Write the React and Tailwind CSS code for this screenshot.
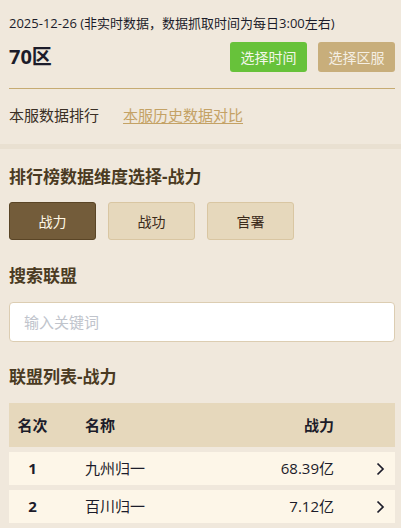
import React, { useState } from 'react';

const dims = ['战力', '战功', '官署'];

const alliances = [
    { rank: 1, name: '九州归一', value: '68.39亿' },
    { rank: 2, name: '百川归一', value: '7.12亿' },
];

function Chevron() {
    return (
        <svg width="9" height="14" viewBox="0 0 9 14" fill="none">
            <polyline points="1.5,1.5 7,7 1.5,12.5" stroke="#1c1c2a" strokeWidth="1.7" />
        </svg>
    );
}

export default function App() {
    const [active, setActive] = useState('战力');

    return (
        <div className="min-h-screen bg-[#f0e8dc] font-['Open_Sans','Noto_Sans_CJK_SC',sans-serif] text-[#1c1c2a]">
            {/* Server header */}
            <div className="pl-[9px] pr-[6px] pt-[13px]">
                <div className="text-[13px] leading-5">2025-12-26 (非实时数据，数据抓取时间为每日3:00左右)</div>
                <div className="mt-[9px] flex items-center justify-between">
                    <div className="text-[20px] font-bold leading-none">70区</div>
                    <div className="flex gap-[11px]">
                        <button className="h-[30px] w-[77px] rounded-[3px] bg-[#67c23a] text-[14px] text-[#f3f7ea]">选择时间</button>
                        <button className="h-[30px] w-[77px] rounded-[3px] bg-[#c8ae7b] text-[14px] text-[#f5efe4]">选择区服</button>
                    </div>
                </div>
                <div className="mt-[16px] border-b border-[#c6ab72]" />
                <div className="mt-[15px] flex items-center pb-[18px] text-[15px] leading-[22px]">
                    <span className="text-[#3a2f25]">本服数据排行</span>
                    <a className="ml-[24px] text-[#c4a265] underline underline-offset-2">本服历史数据对比</a>
                </div>
            </div>

            <div className="h-[5px] bg-[#e9e0d1]" />

            <div className="pl-[9px] pr-[6px] pt-[16px] pb-4">
                <h2 className="text-[17px] font-bold leading-6 text-[#4a3a22]">排行榜数据维度选择-{active}</h2>
                <div className="mt-[13px] flex gap-3">
                    {dims.map((d) => (
                        <button
                            key={d}
                            onClick={() => setActive(d)}
                            className={
                                d === active
                                    ? 'h-[38px] w-[87px] rounded-[3px] border border-[#5a4526] bg-[#735c3a] text-[14px] text-[#fff8e6]'
                                    : 'h-[38px] w-[87px] rounded-[3px] border border-[#d9c6a2] bg-[#e6d8bc] text-[14px] text-[#3a2a1a]'
                            }
                        >
                            {d}
                        </button>
                    ))}
                </div>

                <h2 className="mt-[24px] text-[17px] font-bold leading-6 text-[#4a3a22]">搜索联盟</h2>
                <input
                    placeholder="输入关键词"
                    className="mt-[14px] h-[40px] w-full rounded-[4px] border border-[#dccdb2] bg-white px-[14px] text-[15px] outline-none placeholder:text-[#c0c4cc]"
                />

                <h2 className="mt-[23px] text-[17px] font-bold leading-6 text-[#4a3a22]">联盟列表-{active}</h2>
                <div className="mt-[14px] flex h-[44px] items-center bg-[#e6d8bc] text-[15px] font-bold">
                    <div className="w-[47px] text-center">名次</div>
                    <div className="pl-[29px]">名称</div>
                    <div className="flex-1 text-right">{active}</div>
                    <div className="w-[61px]" />
                </div>
                {alliances.map((a) => (
                    <div key={a.rank} className="mt-[5px] flex h-[33px] items-center bg-[#fdf6e8] text-[15px]">
                        <div className="w-[47px] text-center font-bold">{a.rank}</div>
                        <div className="pl-[29px]">{a.name}</div>
                        <div className="flex-1 text-right">{a.value}</div>
                        <div className="flex w-[61px] justify-end pr-[10px]">
                            <Chevron />
                        </div>
                    </div>
                ))}
            </div>
        </div>
    );
}
